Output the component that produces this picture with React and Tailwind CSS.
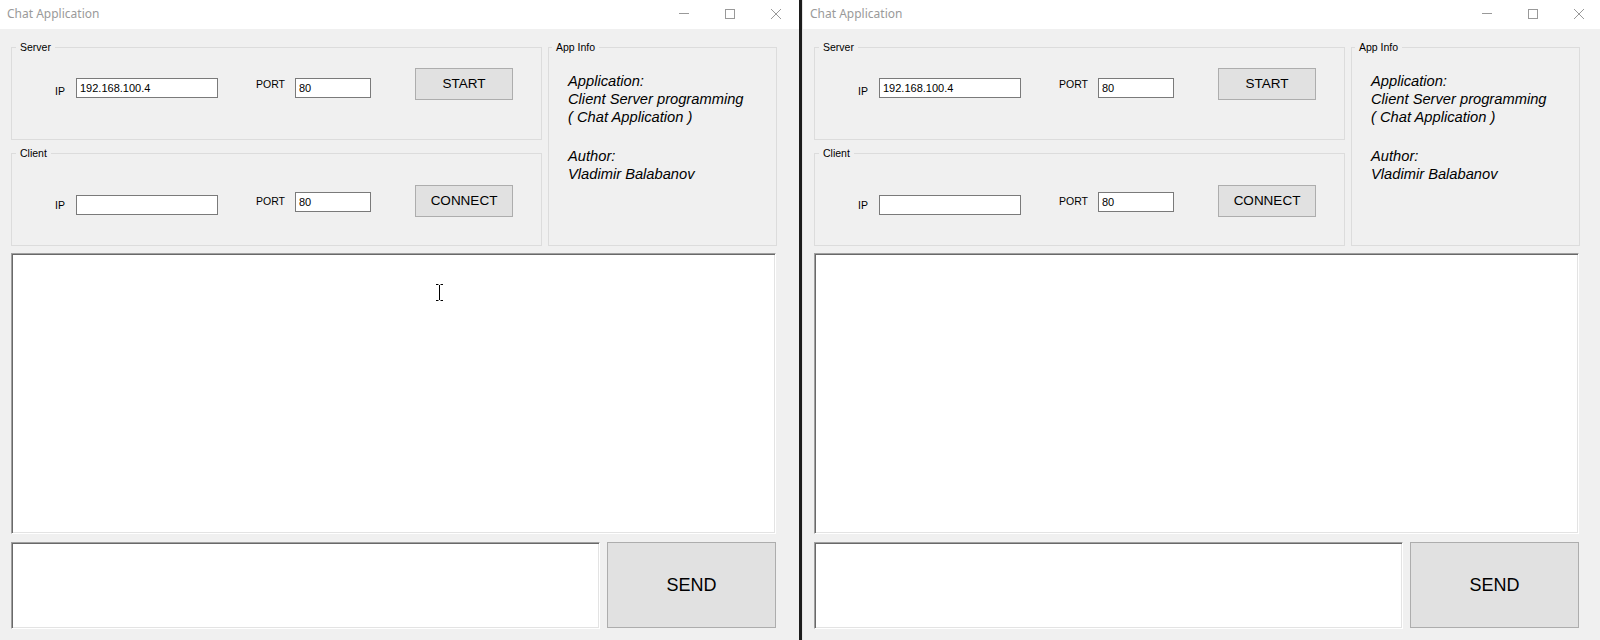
import React from "react";

function TitleBar() {
  return (
    <div className="flex h-[29px] shrink-0 items-start justify-between bg-white">
      <div className="pl-[7px] pt-[6px] font-['Noto_Sans',sans-serif] text-[12px] leading-[16px] text-[#9a9a9a]">
        Chat Application
      </div>
      <div className="flex">
        <div className="flex h-[29px] w-[46px] justify-center pt-[9px]">
          <svg width="10" height="10" viewBox="0 0 10 10">
            <path d="M0 4.5H10" stroke="#999" strokeWidth="1" fill="none" />
          </svg>
        </div>
        <div className="flex h-[29px] w-[46px] justify-center pt-[9px]">
          <svg width="10" height="10" viewBox="0 0 10 10">
            <rect x="0.5" y="0.5" width="9" height="9" stroke="#999" strokeWidth="1" fill="none" />
          </svg>
        </div>
        <div className="flex h-[29px] w-[46px] justify-center pt-[9px]">
          <svg width="10" height="10" viewBox="0 0 10 10">
            <path d="M0 0L10 10M10 0L0 10" stroke="#999" strokeWidth="1" fill="none" />
          </svg>
        </div>
      </div>
    </div>
  );
}

function Field({ value, w, mt }) {
  return (
    <div
      className={`flex h-[20px] items-center border border-[#7a7a7a] bg-white pl-[3px] text-[11px] text-black ${w} ${mt}`}
    >
      {value}
    </div>
  );
}

function Button({ label, mt }) {
  return (
    <div
      className={`ml-[44px] flex h-[32px] w-[98px] items-center justify-center border border-[#adadad] bg-[#e1e1e1] text-[13.5px] text-black ${mt}`}
    >
      {label}
    </div>
  );
}

function Window({ cursor }) {
  return (
    <div className="flex h-[640px] w-[799px] shrink-0 flex-col bg-[#f0f0f0] font-['Liberation_Sans',Arial,sans-serif] text-black">
      <TitleBar />
      <div className="flex flex-col pl-[11px] pt-[12px]">
        <div className="flex gap-[6px]">
          <div className="flex flex-col gap-[7px]">
            <fieldset className="h-[99px] w-[531px] min-w-0 border border-[#dcdcdc]">
              <legend className="ml-[4px] px-[4px] text-[10.5px] leading-[12px]">Server</legend>
              <div className="flex items-start">
                <div className="ml-[43px] mt-[32px] w-[21px] text-[10.5px] leading-[12px]">IP</div>
                <Field value="192.168.100.4" w="w-[142px]" mt="mt-[25px]" />
                <div className="ml-[38px] mt-[25px] w-[39px] text-[10.5px] leading-[12px]">PORT</div>
                <Field value="80" w="w-[76px]" mt="mt-[25px]" />
                <Button label="START" mt="mt-[15px]" />
              </div>
            </fieldset>
            <fieldset className="h-[99px] w-[531px] min-w-0 border border-[#dcdcdc]">
              <legend className="ml-[4px] px-[4px] text-[10.5px] leading-[12px]">Client</legend>
              <div className="flex items-start">
                <div className="ml-[43px] mt-[40px] w-[21px] text-[10.5px] leading-[12px]">IP</div>
                <Field value="" w="w-[142px]" mt="mt-[36px]" />
                <div className="ml-[38px] mt-[36px] w-[39px] text-[10.5px] leading-[12px]">PORT</div>
                <Field value="80" w="w-[76px]" mt="mt-[33px]" />
                <Button label="CONNECT" mt="mt-[26px]" />
              </div>
            </fieldset>
          </div>
          <fieldset className="h-[205px] w-[229px] min-w-0 border border-[#dcdcdc]">
            <legend className="ml-[3px] px-[4px] text-[10.5px] leading-[12px]">App Info</legend>
            <div className="mt-[19px] pl-[19px] text-[14.7px] italic leading-[18px]">
              <div>Application:</div>
              <div>Client Server programming</div>
              <div>( Chat Application )</div>
              <div className="mt-[21px]">Author:</div>
              <div>Vladimir Balabanov</div>
            </div>
          </fieldset>
        </div>
        <div className="relative mt-[7px] h-[281px] w-[765px] border-t border-l border-r border-b border-t-[#a0a0a0] border-l-[#a0a0a0] border-r-white border-b-white bg-white shadow-[inset_1px_1px_0_#696969,inset_-1px_-1px_0_#e3e3e3]">
          {cursor && (
            <svg className="absolute left-[424px] top-[30px]" width="7" height="17" viewBox="0 0 7 17">
              <path d="M0 0.5H2.5M4.5 0.5H7M3.5 1V16M0 16.5H2.5M4.5 16.5H7" stroke="#000" strokeWidth="1" fill="none" />
            </svg>
          )}
        </div>
        <div className="mt-[8px] flex items-start gap-[7px]">
          <div className="h-[87px] w-[589px] border-t border-l border-r border-b border-t-[#a0a0a0] border-l-[#a0a0a0] border-r-white border-b-white bg-white shadow-[inset_1px_1px_0_#696969,inset_-1px_-1px_0_#e3e3e3]" />
          <div className="flex h-[86px] w-[169px] items-center justify-center border border-[#adadad] bg-[#e1e1e1] text-[18px] text-black">
            SEND
          </div>
        </div>
      </div>
    </div>
  );
}

export default function App() {
  return (
    <div className="flex h-[640px] w-[1600px] overflow-hidden bg-[#f0f0f0]">
      <Window cursor />
      <div className="h-[640px] w-[3px] shrink-0 bg-[#1c1c1c]" />
      <div className="flex h-[640px] w-[798px] shrink-0 overflow-hidden border-l border-l-[#e4e4e4]">
        <Window />
      </div>
    </div>
  );
}
